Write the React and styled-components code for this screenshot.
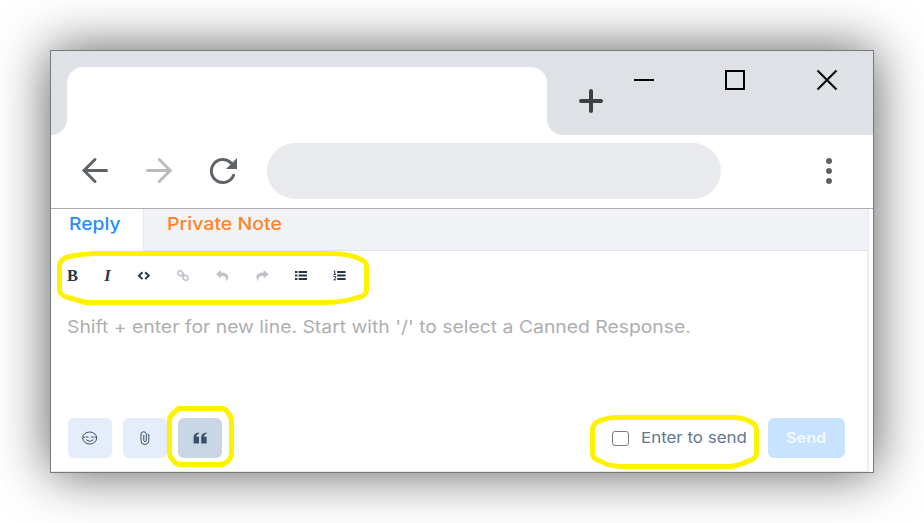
import React from 'react';
import styled, { createGlobalStyle } from 'styled-components';

const Global = createGlobalStyle`
  * { box-sizing: border-box; }
  html, body { margin: 0; background: #fff; }
  body { font-family: Inter, "Liberation Sans", sans-serif; }
  svg { display: block; overflow: visible; flex: none; }
`;

const Stage = styled.main`
  width: 924px;
  height: 523px;
  padding: 50px;
  overflow: hidden;
`;

const Window = styled.section`
  position: relative;
  display: flex;
  flex-direction: column;
  width: 824px;
  height: 423px;
  border: 1px solid #77797b;
  background: #fff;
  box-shadow: 0 0 50px rgba(0, 0, 0, 0.65);
`;

const TabStrip = styled.header`
  display: flex;
  height: 84px;
`;

const StripEdge = styled.div`
  width: 16px;
  background: #dee1e6;
  border-bottom-right-radius: 16px;
`;

const TabSlot = styled.div`
  width: 480px;
  padding-top: 16px;
  background: linear-gradient(#dee1e6 50%, #fff 50%);
`;

const BrowserTab = styled.div`
  height: 100%;
  background: #fff;
  border-radius: 16px 16px 0 0;
`;

const StripRest = styled.div`
  flex: 1;
  display: flex;
  align-items: flex-start;
  padding: 19px 36px 0 32px;
  background: #dee1e6;
  border-bottom-left-radius: 16px;
`;

const NewTab = styled.div`
  margin: 19px 31px 0 0;
`;

const WindowControls = styled.div`
  flex: 1;
  display: flex;
  gap: 71px;
`;

const NavBar = styled.nav`
  display: flex;
  align-items: center;
  height: 74px;
  padding: 0 41px 1px 31px;
  border-bottom: 1px solid #acacae;
`;

const NavIcons = styled.div`
  display: flex;
  gap: 38px;
  width: 185px;
`;

const AddressBar = styled.div`
  width: 454px;
  height: 56px;
  border-radius: 28px;
  background: #e8eaed;
`;

const MenuSlot = styled.div`
  margin-left: auto;
`;

const Editor = styled.div`
  flex: 1;
  display: flex;
  flex-direction: column;
  width: 818px;
  border-right: 2px solid #ebeef6;
  border-bottom: 1px solid #e3e9ef;
`;

const ModeTabs = styled.div`
  display: flex;
  height: 42px;
  background: #f1f3f7;
  border-bottom: 1px solid #dde5ec;
`;

const ModeTab = styled.div`
  width: ${(p) => p.$width || 'auto'};
  height: 42px;
  padding: ${(p) => p.$pad};
  background: ${(p) => (p.$active ? '#fff' : 'transparent')};
  border-right: ${(p) => (p.$active ? '1px solid #e4e9ef' : '0')};
`;

const Label = styled.span`
  display: block;
  width: max-content;
  white-space: nowrap;
  font-size: ${(p) => p.$size}px;
  line-height: 24px;
  font-weight: ${(p) => p.$weight || 400};
  color: ${(p) => p.$color};
  transform: scaleX(${(p) => p.$stretch || 1});
  transform-origin: 0 50%;
`;

const FormatBar = styled.div`
  display: grid;
  grid-template-columns: 39px 31px 41px 38px 40px 39px 39px 38px;
  align-items: center;
  height: 50px;
  padding-left: 2px;
`;

const FormatButton = styled.div`
  display: flex;
  align-items: center;
  justify-content: center;
  height: 24px;
  color: ${(p) => (p.$muted ? '#c0c4ca' : '#263445')};
`;

const Letter = styled.span`
  font: ${(p) => (p.$italic ? 'italic' : 'normal')} bold 16.5px/20px "Liberation Serif", serif;
`;

const Message = styled.div`
  flex: 1;
  padding: 14px 0 0 16px;
`;

const Footer = styled.footer`
  display: flex;
  align-items: center;
  height: 53px;
  padding: 0 22px 13px 17px;
`;

const ToolButton = styled.div`
  display: flex;
  align-items: center;
  justify-content: center;
  width: 44px;
  height: 40px;
  margin-right: 11px;
  border-radius: 6px;
  color: #3c4f68;
  background: ${(p) => (p.$active ? '#c9d6e5' : '#e5edfb')};
`;

const EnterOption = styled.div`
  display: flex;
  align-items: center;
  width: 156px;
  margin-left: auto;
`;

const CheckBox = styled.span`
  width: 17px;
  height: 15px;
  margin-right: 11.5px;
  border: 1.5px solid #7b7b7b;
  border-radius: 3px;
`;

const SendButton = styled.div`
  display: flex;
  align-items: center;
  width: 77px;
  height: 40px;
  padding-left: 18px;
  border-radius: 6px;
  background: #c8e3ff;
`;

const Marks = styled.svg`
  position: absolute;
  left: -51px;
  top: -51px;
  pointer-events: none;
`;

function Formatting() {
  return (
    <FormatBar>
      <FormatButton><Letter>B</Letter></FormatButton>
      <FormatButton><Letter $italic>I</Letter></FormatButton>
      <FormatButton>
        <svg width="14" height="10" viewBox="0 0 14 10" fill="none" stroke="currentColor" strokeWidth="1.9">
          <path d="M5.5 1.3 1.9 4.7l3.6 3.4M8.2 1.3l3.6 3.4-3.6 3.4" />
        </svg>
      </FormatButton>
      <FormatButton $muted>
        <svg width="14" height="12" viewBox="0 0 14 12" fill="none" stroke="currentColor" strokeWidth="1.5">
          <rect x="1.8" y="1.1" width="5.4" height="4.3" rx="2.1" transform="rotate(38 4.5 3.2)" />
          <rect x="6.7" y="5.6" width="5.4" height="4.3" rx="2.1" transform="rotate(38 9.4 7.8)" />
          <path d="m5.6 4.2 2.8 2.5" />
        </svg>
      </FormatButton>
      <FormatButton $muted>
        <svg width="14" height="12" viewBox="0 0 14 12" fill="currentColor">
          <path d="M.8 4.2 6 0v2.5c4.6 0 7.4 1.6 7.2 5-.1 1.6-.9 2.8-2.4 3.6 1.1-3.3-.4-5-4.8-5v2.4z" />
        </svg>
      </FormatButton>
      <FormatButton $muted>
        <svg width="14" height="12" viewBox="0 0 14 12" fill="currentColor">
          <path d="M13.8 4.2 8.600 0v2.5c-4.6 0-7.400 1.600-7.200 5 .1 1.600.9 2.800 2.400 3.600-1.100-3.300.4-5 4.800-5v2.400z" />
        </svg>
      </FormatButton>
      <FormatButton>
        <svg width="12" height="10" viewBox="0 0 12 10" stroke="currentColor" strokeWidth="2">
          <path d="M0 1h2.4M0 4.500h2.4M0 8h2.4M3.6 1H12M3.6 4.500H12M3.6 8H12" />
        </svg>
      </FormatButton>
      <FormatButton>
        <svg width="13" height="12" viewBox="0 0 13 12" fill="none" stroke="currentColor">
          <path strokeWidth="2" d="M4.2 2H12.600M4.2 5.500H12.600M4.2 9H12.600" />
          <path strokeWidth="1" d="M.7 1.1h1.1v3.2M.5 4.400h2.6M.5 6.500h2.1v1.5L.7 9.800h2.4" />
        </svg>
      </FormatButton>
    </FormatBar>
  );
}

export default function App() {
  return (
    <>
      <Global />
      <Stage>
        <Window>
          <TabStrip>
            <StripEdge />
            <TabSlot><BrowserTab /></TabSlot>
            <StripRest>
              <NewTab>
                <svg width="24" height="24" viewBox="0 0 24 24" stroke="#3c4043" strokeWidth="4" strokeLinecap="round">
                  <path d="M2 12h20M12 2v20" />
                </svg>
              </NewTab>
              <WindowControls>
                <svg width="20" height="20" viewBox="0 0 20 20" stroke="#000" strokeWidth="2"><path d="M0 10h20" /></svg>
                <svg width="20" height="20" viewBox="0 0 20 20" fill="none" stroke="#000" strokeWidth="2"><path d="M1 1h18v18H1z" /></svg>
                <svg width="21" height="20" viewBox="0 0 21 20" stroke="#000" strokeWidth="2"><path d="m1.500.5 19 19M20.500.5l-19 19" /></svg>
              </WindowControls>
            </StripRest>
          </TabStrip>
          <NavBar>
            <NavIcons>
              <svg width="26" height="26" viewBox="0 0 26 26" fill="none" stroke="#5f6368" strokeWidth="3" strokeLinecap="round">
                <path d="M24.5 12.500h-22.500M13 1.500l-11 11 11 11" />
              </svg>
              <svg width="26" height="26" viewBox="0 0 26 26" fill="none" stroke="#babcbe" strokeWidth="3" strokeLinecap="round">
                <path d="M1.500 12.500h22.500M13.300 1.500l11 11-11 11" />
              </svg>
              <svg width="27" height="26" viewBox="0 0 27 26" fill="none">
                <path d="M23.6 17.2A11.5 11.5 0 1 1 21 4.9" stroke="#5f6368" strokeWidth="3" strokeLinecap="round" />
                <path d="M27 0v11H16z" fill="#5f6368" />
              </svg>
            </NavIcons>
            <AddressBar />
            <MenuSlot>
              <svg width="6" height="26" viewBox="0 0 6 26" fill="#5f6368">
                <circle cx="3" cy="3" r="3" /><circle cx="3" cy="13" r="3" /><circle cx="3" cy="23" r="3" />
              </svg>
            </MenuSlot>
          </NavBar>
          <Editor>
            <ModeTabs>
              <ModeTab $active $width="93px" $pad="3px 0 0 17.500px">
                <Label $size={17.5} $weight={500} $color="#2b8cff" $stretch={1.1}>Reply</Label>
              </ModeTab>
              <ModeTab $pad="3px 0 0 22.500px">
                <Label $size={17.5} $weight={500} $color="#ff8428" $stretch={1.115}>Private Note</Label>
              </ModeTab>
            </ModeTabs>
            <Formatting />
            <Message>
              <Label $size={17.5} $color="#aeaeb0" $stretch={1.105}>
                Shift + enter for new line. Start with '/' to select a Canned Response.
              </Label>
            </Message>
            <Footer>
              <ToolButton>
                <svg width="16" height="14" viewBox="0 0 16 14" fill="none" stroke="currentColor" strokeWidth="1">
                  <ellipse cx="7.700" cy="7" rx="7" ry="6" />
                  <path d="M.9 6.300h2M12.500 6.300h2M3.700 6h2.700M9 6h2.700M4 8.600q3.800 3.200 7.500 0" />
                </svg>
              </ToolButton>
              <ToolButton>
                <svg width="10" height="14" viewBox="0 0 10 14" fill="none" stroke="currentColor" strokeWidth="1">
                  <path d="M1 3v6.8a3.4 3.2 0 0 0 7.8 0V4M1 3.2a2.6 2.4 0 0 1 5.3 0v6.2a1.2 1.2 0 0 1-2.5 0V4M8.8 4.2a1 1 0 0 0-1.2-1" />
                </svg>
              </ToolButton>
              <ToolButton $active>
                <svg width="14" height="12" viewBox="0 0 14 12" fill="currentColor">
                  <path d="M6 .5v1.2C4.3 2 3.500 3 3.400 4.700H6v6.800H.6V5.400C.6 2.500 2.400.6 6 .5zM13.600.5v1.2c-1.700.3-2.500 1.300-2.600 3h2.600v6.800H8.200V5.400c0-2.900 1.800-4.800 5.400-4.900z" />
                </svg>
              </ToolButton>
              <EnterOption>
                <CheckBox />
                <Label $size={14.9} $color="#647792" $stretch={1.135}>Enter to send</Label>
              </EnterOption>
              <SendButton>
                <Label $size={14.5} $weight={600} $color="#f5faff" $stretch={1.12}>Send</Label>
              </SendButton>
            </Footer>
          </Editor>
          <Marks width="924" height="523" viewBox="0 0 924 523" fill="none" stroke="#fff200" strokeWidth="5" strokeLinejoin="round">
            <path d="M94 253.500H332Q352 254 362 260Q366.500 262 366.500 267V290Q366 297 356 298Q344 302 326 302.500H86Q77 300 66 297Q59.500 294 59.500 290V267Q59 258 72 256Q82 254 94 253.500Z" />
            <path d="M180 408.500H223Q226 409 228 413Q231.500 416 231.500 420V453Q231 459 227 462Q224 464.500 219 464.500H182Q176 465 173 460Q169.500 457 169.500 453V420Q170 415 175 412Q177 409 180 408.500Z" />
            <path d="M614 417.500H734Q744 418 751 422Q756.500 425 756.500 430V452Q757 459 748 461Q740 465.500 730 466.500H620Q608 466 600 461Q592.500 459 592.500 453V430Q592 423 602 420Q608 418 614 417.500Z" />
          </Marks>
        </Window>
      </Stage>
    </>
  );
}
